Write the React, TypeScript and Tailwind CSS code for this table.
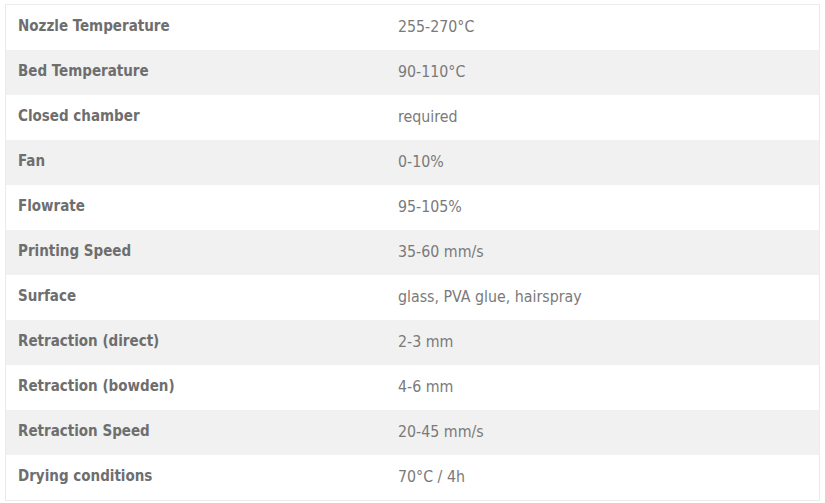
import React from "react";

const rows: [string, string][] = [
  ["Nozzle Temperature", "255-270°C"],
  ["Bed Temperature", "90-110°C"],
  ["Closed chamber", "required"],
  ["Fan", "0-10%"],
  ["Flowrate", "95-105%"],
  ["Printing Speed", "35-60 mm/s"],
  ["Surface", "glass, PVA glue, hairspray"],
  ["Retraction (direct)", "2-3 mm"],
  ["Retraction (bowden)", "4-6 mm"],
  ["Retraction Speed", "20-45 mm/s"],
  ["Drying conditions", "70°C / 4h"],
];

export default function App() {
  return (
    <div className="w-[825px] h-[503px] bg-white pt-[4px] pl-[5px]">
      <div
        className="w-[815px] border border-[#ebebeb]"
        style={{ fontFamily: '"DejaVu Sans Condensed", "Liberation Sans Narrow", Roboto, sans-serif' }}
      >
        {rows.map(([k, v], i) => (
          <div
            key={k}
            className={`flex h-[45px] items-center pb-[2px] ${i % 2 === 1 ? "bg-[#f1f1f1]" : "bg-white"}`}
          >
            <div className="w-[380px] pl-[12px] text-[15px] font-bold text-[#6e6e6e]">{k}</div>
            <div className="pl-[12px] text-[15.8px] text-[#7a7a7a]">{v}</div>
          </div>
        ))}
      </div>
    </div>
  );
}
